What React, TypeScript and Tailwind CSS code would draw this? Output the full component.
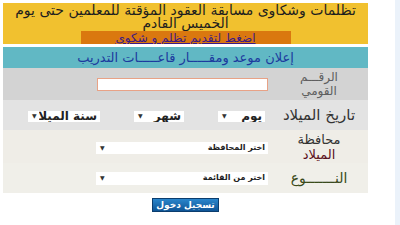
import React from 'react';

const arabic = { fontFamily: '"DejaVu Sans", "Noto Sans", sans-serif' };

const FakeSelect: React.FC<{ label: string; className: string; textClass?: string }> = ({ label, className, textClass = 'text-[12px] font-bold' }) => (
  <div className={`flex items-center overflow-hidden bg-white ${className}`}>
    <span className={`min-w-0 flex-1 overflow-hidden whitespace-nowrap pr-[3px] leading-none text-[#222] ${textClass}`}>{label}</span>
    <span className="shrink-0 pl-[4px] pr-[2px] text-[6px] leading-none text-[#333]">▼</span>
  </div>
);

export default function App() {
  return (
    <div className="flex h-[225px] w-[400px] overflow-hidden bg-white" dir="ltr" style={arabic}>
      <div className="ml-[3px] mt-[3px] flex w-[365px] flex-col" dir="rtl">
        {/* Notice box */}
        <div className="flex h-[41px] flex-col items-center overflow-hidden bg-[#f1c12f] pt-[1px]">
          <p className="h-[26px] whitespace-nowrap text-center text-[14px] leading-[13px] text-[#1e1e1e]">
            تظلمات وشكاوى مسابقة العقود المؤقتة للمعلمين حتى يوم
            <br />
            الخميس القادم
          </p>
          <div className="mt-auto flex h-[13px] w-[210px] items-center justify-center bg-[#da780f]">
            <a className="text-[12px] leading-none text-[#3b1a86] underline">اضغط لتقديم تظلم و شكوى</a>
          </div>
        </div>

        {/* Training banner */}
        <div className="mt-[3px] flex h-[21px] items-center justify-center bg-[#61b8c4]">
          <span className="text-[13px] leading-none text-[#1c3a9e]">إعلان موعد ومقـــــار قاعـــــات التدريب</span>
        </div>

        {/* Form rows */}
        <div className="flex h-[32px] bg-[#d3d3d3]">
          <div className="flex w-[98px] flex-col items-center justify-center text-[12px] leading-[14px] text-[#5e5e5e]">
            <span>الرقـــم</span>
            <span>القومي</span>
          </div>
          <div className="flex flex-1 items-center pr-[2px]">
            <div className="h-[13px] w-[171px] border border-[#e8a286] bg-white" />
          </div>
        </div>

        <div className="flex h-[30px] bg-[#e3e3e3]">
          <div className="flex w-[98px] items-center justify-center text-[15px] text-[#333]">تاريخ الميلاد</div>
          <div className="flex flex-1 items-center gap-[34px] pr-[5px] pt-[2px]">
            <FakeSelect label="يوم" className="h-[11px] w-[47px]" />
            <FakeSelect label="شهر" className="h-[11px] w-[50px]" />
            <FakeSelect label="سنة الميلاد" className="h-[11px] w-[72px]" />
          </div>
        </div>

        <div className="flex h-[33px] bg-[#efede7]">
          <div className="flex w-[98px] flex-col items-center justify-center text-[13px] leading-[15px] text-[#333]">
            <span>محافظة</span>
            <span className="text-[#5a1020]">الميلاد</span>
          </div>
          <div className="flex flex-1 items-center pr-[2px] pt-[2px]">
            <FakeSelect label="اختر المحافظة" className="h-[12px] w-[172px]" textClass="text-[8px] font-bold" />
          </div>
        </div>

        <div className="flex h-[30px] bg-[#f0efe9]">
          <div className="flex w-[98px] items-center justify-center text-[14px] text-[#3a4a1a]">النـــــــوع</div>
          <div className="flex flex-1 items-center pr-[2px]">
            <FakeSelect label="اختر من القائمة" className="h-[13px] w-[172px]" textClass="text-[8px] font-bold" />
          </div>
        </div>

        {/* Submit */}
        <div className="flex justify-center pt-[5px]">
          <button className="flex h-[14px] w-[67px] items-center justify-center border border-[#0b3d6e] bg-gradient-to-b from-[#2a86cc] to-[#0f5596] text-[9px] font-bold leading-none text-white">
            تسجيل دخول
          </button>
        </div>
      </div>
      <div className="flex-1" />
      <div className="h-full w-[5px] bg-[#ebf2fa]" />
    </div>
  );
}
